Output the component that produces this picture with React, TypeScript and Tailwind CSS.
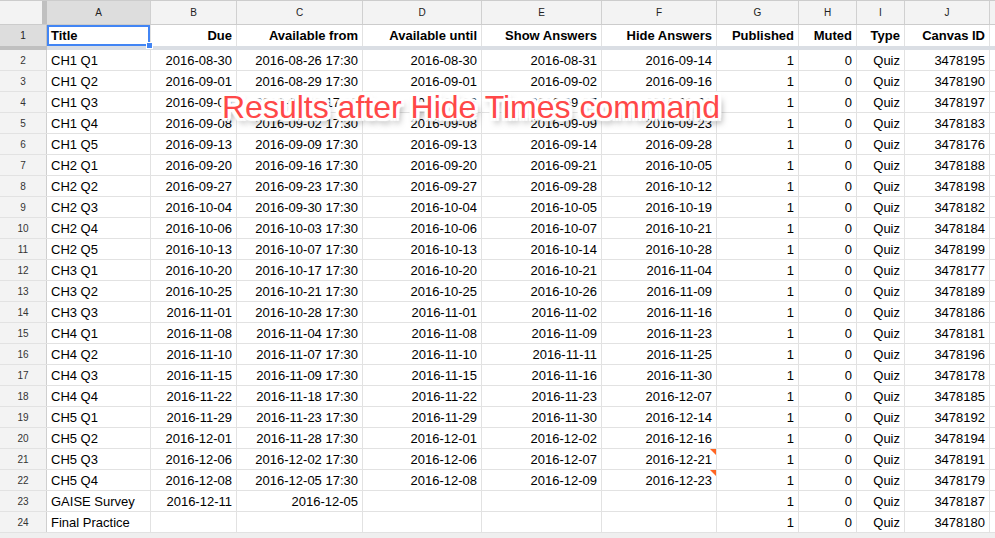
import React from "react"

const widths = [
  "w-[104px]",
  "w-[86px]",
  "w-[126px]",
  "w-[119px]",
  "w-[120px]",
  "w-[115px]",
  "w-[82px]",
  "w-[58px]",
  "w-[48px]",
  "w-[85px]",
]

const letters = ["A", "B", "C", "D", "E", "F", "G", "H", "I", "J"]

const header = [
  "Title",
  "Due",
  "Available from",
  "Available until",
  "Show Answers",
  "Hide Answers",
  "Published",
  "Muted",
  "Type",
  "Canvas ID",
]

// title, due, from, until, show, hide, canvas id
const quizzes: [string, string, string, string, string, string, string][] = [
  ["CH1 Q1", "2016-08-30", "2016-08-26 17:30", "2016-08-30", "2016-08-31", "2016-09-14", "3478195"],
  ["CH1 Q2", "2016-09-01", "2016-08-29 17:30", "2016-09-01", "2016-09-02", "2016-09-16", "3478190"],
  ["CH1 Q3", "2016-09-06", "2016-09-02 17:30", "2016-09-06", "2016-09-07", "2016-09-21", "3478197"],
  ["CH1 Q4", "2016-09-08", "2016-09-02 17:30", "2016-09-08", "2016-09-09", "2016-09-23", "3478183"],
  ["CH1 Q5", "2016-09-13", "2016-09-09 17:30", "2016-09-13", "2016-09-14", "2016-09-28", "3478176"],
  ["CH2 Q1", "2016-09-20", "2016-09-16 17:30", "2016-09-20", "2016-09-21", "2016-10-05", "3478188"],
  ["CH2 Q2", "2016-09-27", "2016-09-23 17:30", "2016-09-27", "2016-09-28", "2016-10-12", "3478198"],
  ["CH2 Q3", "2016-10-04", "2016-09-30 17:30", "2016-10-04", "2016-10-05", "2016-10-19", "3478182"],
  ["CH2 Q4", "2016-10-06", "2016-10-03 17:30", "2016-10-06", "2016-10-07", "2016-10-21", "3478184"],
  ["CH2 Q5", "2016-10-13", "2016-10-07 17:30", "2016-10-13", "2016-10-14", "2016-10-28", "3478199"],
  ["CH3 Q1", "2016-10-20", "2016-10-17 17:30", "2016-10-20", "2016-10-21", "2016-11-04", "3478177"],
  ["CH3 Q2", "2016-10-25", "2016-10-21 17:30", "2016-10-25", "2016-10-26", "2016-11-09", "3478189"],
  ["CH3 Q3", "2016-11-01", "2016-10-28 17:30", "2016-11-01", "2016-11-02", "2016-11-16", "3478186"],
  ["CH4 Q1", "2016-11-08", "2016-11-04 17:30", "2016-11-08", "2016-11-09", "2016-11-23", "3478181"],
  ["CH4 Q2", "2016-11-10", "2016-11-07 17:30", "2016-11-10", "2016-11-11", "2016-11-25", "3478196"],
  ["CH4 Q3", "2016-11-15", "2016-11-09 17:30", "2016-11-15", "2016-11-16", "2016-11-30", "3478178"],
  ["CH4 Q4", "2016-11-22", "2016-11-18 17:30", "2016-11-22", "2016-11-23", "2016-12-07", "3478185"],
  ["CH5 Q1", "2016-11-29", "2016-11-23 17:30", "2016-11-29", "2016-11-30", "2016-12-14", "3478192"],
  ["CH5 Q2", "2016-12-01", "2016-11-28 17:30", "2016-12-01", "2016-12-02", "2016-12-16", "3478194"],
  ["CH5 Q3", "2016-12-06", "2016-12-02 17:30", "2016-12-06", "2016-12-07", "2016-12-21", "3478191"],
  ["CH5 Q4", "2016-12-08", "2016-12-05 17:30", "2016-12-08", "2016-12-09", "2016-12-23", "3478179"],
]

const rows: string[][] = [
  ...quizzes.map(([t, due, from, until, show, hide, id]) => [t, due, from, until, show, hide, "1", "0", "Quiz", id]),
  ["GAISE Survey", "2016-12-11", "2016-12-05", "", "", "", "1", "0", "Quiz", "3478187"],
  ["Final Practice", "", "", "", "", "", "1", "0", "Quiz", "3478180"],
]

// rows with a note marker on the Hide Answers cell
const noted = [19, 20]

function Cell({ i, text, bold, note }: { i: number; text: string; bold?: boolean; note?: boolean }) {
  return (
    <div
      className={`relative shrink-0 ${widths[i]} h-full border-r border-[#e2e2e2] px-[4px] pt-[1px] flex items-center overflow-hidden whitespace-nowrap text-[13px] text-black ${
        i === 0 ? "justify-start" : "justify-end"
      } ${bold ? "font-bold" : ""}`}
    >
      {text}
      {note && (
        <div className="absolute top-0 right-0 w-0 h-0 border-l-[6px] border-l-transparent border-t-[6px] border-t-[#ff6522]" />
      )}
    </div>
  )
}

export default function App() {
  return (
    <div className="relative w-[995px] h-[538px] overflow-hidden bg-[#efefef] font-['Liberation_Sans',Arial,sans-serif]">
      {/* column letters */}
      <div className="flex h-[25px] border-t border-b border-[#cccccc] bg-[#f3f3f3]">
        <div className="shrink-0 w-[47px] h-full border-r-[5px] border-[#c0c0c0]" />
        {letters.map((l, i) => (
          <div
            key={l}
            className={`shrink-0 ${widths[i]} h-full border-r border-[#d0d0d0] flex items-center justify-center text-[10px] text-[#222] ${
              i === 0 ? "bg-[#dddddd]" : ""
            }`}
          >
            {l}
          </div>
        ))}
        <div className="flex-1" />
      </div>

      {/* frozen header row */}
      <div className="relative z-10 flex h-[21px] bg-white">
        <div className="shrink-0 w-[47px] h-full bg-[#dddddd] border-r border-[#c0c0c0] flex items-center justify-center text-[10px] text-[#222]">
          1
        </div>
        {header.map((h, i) => (
          <div key={h} className="relative shrink-0 h-full flex">
            <Cell i={i} text={h} bold />
            {i === 0 && (
              <div className="absolute inset-y-0 left-0 right-[1px] border-2 border-[#4285f4]">
                <div className="absolute right-[-5px] bottom-[-5px] w-[7px] h-[7px] bg-[#4285f4] border border-white" />
              </div>
            )}
          </div>
        ))}
        <div className="flex-1" />
      </div>
      <div className="flex h-[4px]">
        <div className="shrink-0 w-[47px] bg-[#c0c0c0]" />
        <div className="flex-1 bg-[#dadee4]" />
      </div>

      {rows.map((r, ri) => (
        <div key={ri} className="flex h-[21px] border-b border-[#e2e2e2] bg-white">
          <div className="shrink-0 w-[47px] h-full bg-[#f3f3f3] border-r border-[#cfcfcf] pt-[1px] flex items-center justify-center text-[10px] text-[#333]">
            {ri + 2}
          </div>
          {r.map((c, i) => (
            <Cell key={i} i={i} text={c} note={i === 5 && noted.includes(ri)} />
          ))}
          <div className="flex-1" />
        </div>
      ))}

      <div className="absolute left-[222px] top-[91px] whitespace-nowrap text-[32px] leading-[32px] text-[#ff4848] [text-shadow:3px_3px_1px_#fff,-3px_-3px_1px_#fff,3px_-3px_1px_#fff,-3px_3px_1px_#fff,0_3px_1px_#fff,0_-3px_1px_#fff,3px_0_1px_#fff,-3px_0_1px_#fff,0_0_4px_#fff,3px_5px_6px_rgba(0,0,0,0.5)]">
        Results after Hide Times command
      </div>
    </div>
  )
}
